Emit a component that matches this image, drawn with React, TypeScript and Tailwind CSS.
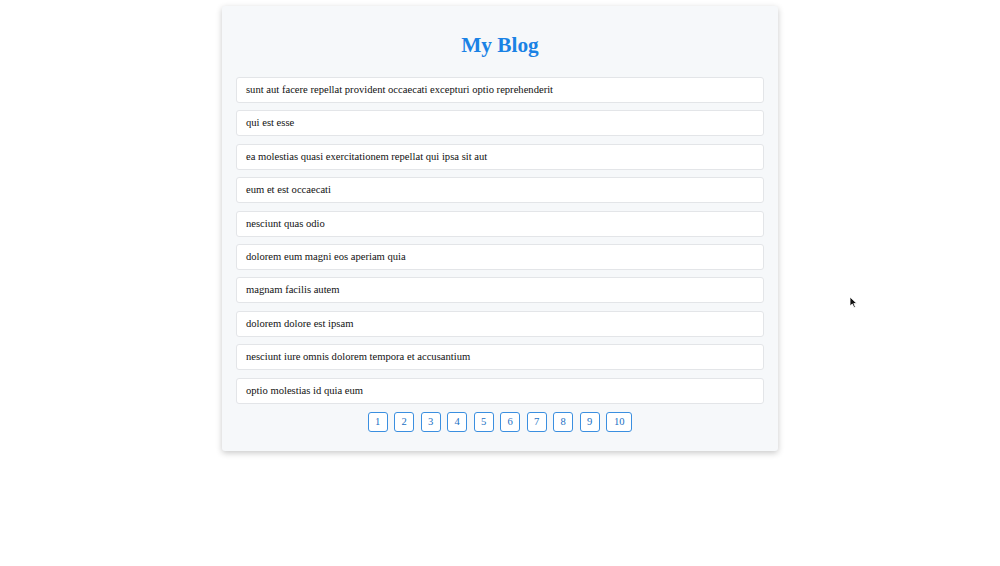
const posts = [
  "sunt aut facere repellat provident occaecati excepturi optio reprehenderit",
  "qui est esse",
  "ea molestias quasi exercitationem repellat qui ipsa sit aut",
  "eum et est occaecati",
  "nesciunt quas odio",
  "dolorem eum magni eos aperiam quia",
  "magnam facilis autem",
  "dolorem dolore est ipsam",
  "nesciunt iure omnis dolorem tempora et accusantium",
  "optio molestias id quia eum",
];

const pages = [1, 2, 3, 4, 5, 6, 7, 8, 9, 10];

export default function App() {
  return (
    <div className="relative w-[1000px] h-[566px] bg-white font-['Liberation_Serif',serif] overflow-hidden">
      <div className="w-[556px] mx-auto mt-[6px] bg-[#f6f8fa] rounded-[3px] shadow-[0_2px_6px_rgba(0,0,0,0.22)] px-[14px] pt-[27px] pb-[19px]">
        <h1 className="text-center text-[21.3px] leading-[24px] font-bold text-[#1a82e5]">
          My Blog
        </h1>
        <ul className="mt-[20px] flex flex-col gap-[7.4px]">
          {posts.map((title) => (
            <li
              key={title}
              className="h-[26px] flex items-center bg-white border border-[#e3e5e8] rounded-[3px] pl-[9px] text-[10.6px] text-[#111]"
            >
              {title}
            </li>
          ))}
        </ul>
        <div className="mt-[8px] flex justify-center gap-[6.5px]">
          {pages.map((p) => (
            <button
              key={p}
              className={`h-[20px] ${p === 10 ? "w-[26px]" : "w-[20px]"} flex items-center justify-center border border-[#3b8fe0] rounded-[3px] bg-white text-[10.6px] text-[#1a6fc4]`}
            >
              {p}
            </button>
          ))}
        </div>
      </div>
      <svg
        className="absolute left-[849px] top-[296px]"
        width="9"
        height="13"
        viewBox="0 0 9 13"
      >
        <path d="M1 1 L1 10 L3.3 8 L5 11.6 L6.4 11 L4.8 7.5 L7.8 7.5 Z" fill="#111" stroke="#fff" strokeWidth="0.8" />
      </svg>
    </div>
  );
}
